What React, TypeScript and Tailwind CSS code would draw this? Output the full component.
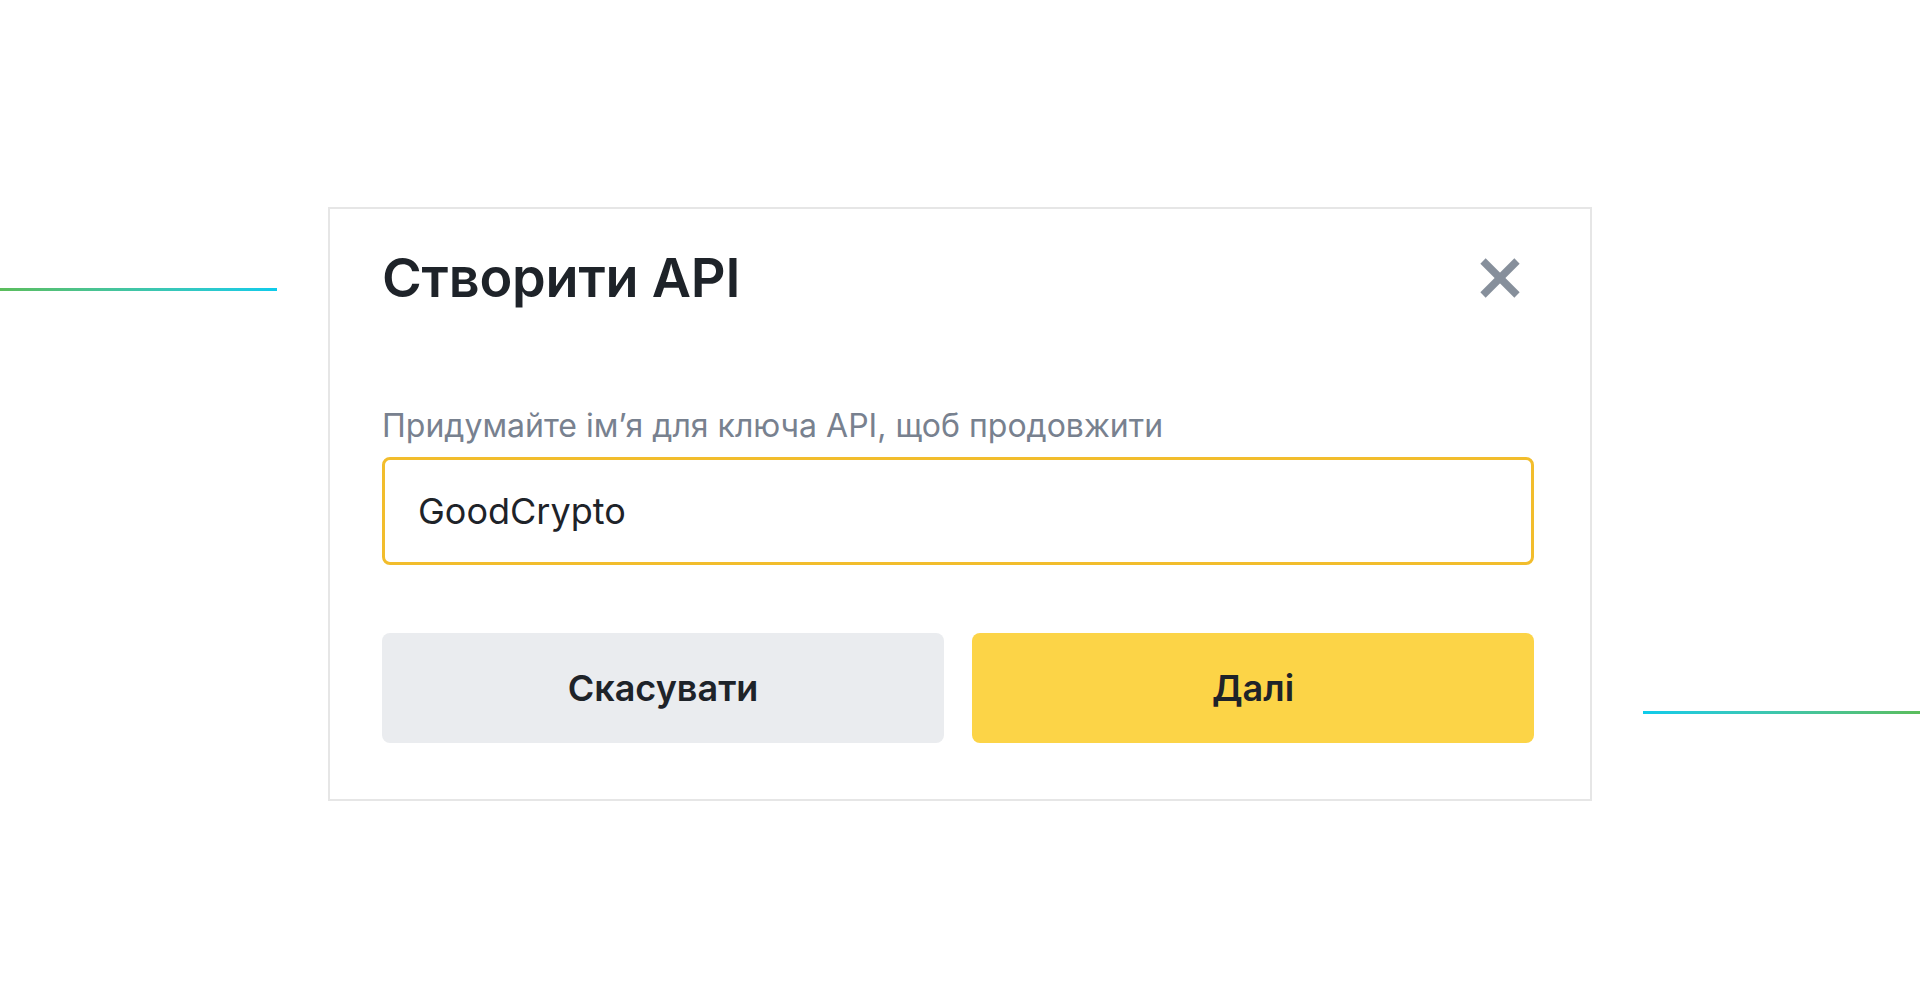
import React from "react";

export default function App() {
  return (
    <div className="relative w-[1920px] h-[1008px] bg-white overflow-hidden [font-family:Inter,'Noto_Sans',sans-serif]">
      {/* decorative lines */}
      <div className="absolute left-0 top-[288px] w-[277px] h-[3px] bg-gradient-to-r from-[#5bbd5b] to-[#0ccbeb]" />
      <div className="absolute left-[1643px] top-[711px] w-[277px] h-[3px] bg-gradient-to-r from-[#0ccbeb] to-[#5bbd5b]" />

      <div className="flex w-full h-full items-center justify-center">
        <div className="w-[1264px] h-[594px] border-2 border-[#e6e6e6] bg-white pl-[52px] pr-[56px] pt-[39px] flex flex-col">
          <div className="flex h-[60px] items-center justify-between">
            <h1 className="text-[54px] leading-none font-semibold text-[#1e2329] tracking-[-0.2px]">Створити API</h1>
            <button className="mr-[13px] w-[42px] h-[42px] flex items-center justify-center" aria-label="close">
              <svg width="42" height="42" viewBox="0 0 42 42">
                <line x1="4" y1="4" x2="38" y2="38" stroke="#868f9b" strokeWidth="7.5" />
                <line x1="38" y1="4" x2="4" y2="38" stroke="#868f9b" strokeWidth="7.5" />
              </svg>
            </button>
          </div>

          <label className="mt-[98px] text-[32px] leading-[40px] text-[#78818f]">
            Придумайте ім’я для ключа API, щоб продовжити
          </label>

          <div className="mt-[11px] h-[108px] border-[3px] border-[#f2bd2c] rounded-[8px] flex items-center pl-[33px]">
            <span className="text-[36px] text-[#1e2329]">GoodCrypto</span>
          </div>

          <div className="mt-[68px] flex gap-[28px]">
            <button className="flex-1 h-[110px] rounded-[8px] bg-[#eaecef] text-[36px] font-semibold text-[#1e2329] flex items-center justify-center">
              Скасувати
            </button>
            <button className="flex-1 h-[110px] rounded-[8px] bg-[#fcd447] text-[36px] font-semibold text-[#1e2329] flex items-center justify-center">
              Далі
            </button>
          </div>
        </div>
      </div>
    </div>
  );
}
